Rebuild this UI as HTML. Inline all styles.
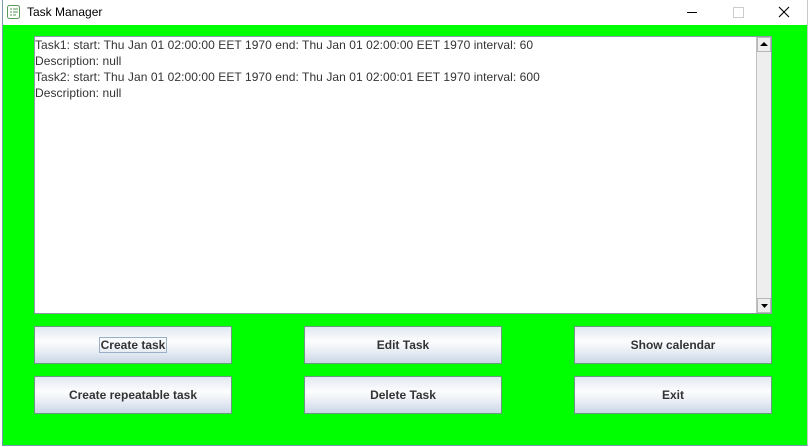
<!DOCTYPE html>
<html><head><style>
body{margin:0;width:811px;height:447px;background:#fff;position:relative;overflow:hidden;font-family:"Liberation Sans",Arial,sans-serif}
.title{position:absolute;left:0;top:0;width:811px;height:25px;background:#fff}
.title span{position:absolute;left:27px;top:5px;font-size:12px;color:#000}
.green{position:absolute;left:3px;top:25px;width:805px;height:421px;background:#00ff00}
.frame{position:absolute;left:2px;top:0;width:806px;height:446px;border-left:1px solid #7a9ab0;border-right:1px solid #c8c8c8;border-bottom:1px solid #7a9ab0;box-sizing:border-box}
.ta{position:absolute;left:34px;top:36px;width:738px;height:278px;background:#fff;border:1px solid #8a9aa8;box-sizing:border-box}
.ta pre{margin:0;position:absolute;left:0;top:0;font-family:"Liberation Sans",Arial,sans-serif;font-size:12px;letter-spacing:0.06px;line-height:16px;color:#333}
.sb{position:absolute;right:0;top:0;width:15px;height:276px;background:#eeeeee;border-left:1px solid #c0c0c0;box-sizing:border-box}
.ab{position:absolute;left:0;width:14px;height:15px;background:#eee;border:1px solid #b8b8b8;box-sizing:border-box}
.btn{position:absolute;width:198px;height:38px;border:1px solid #6a9a80;box-sizing:border-box;background:linear-gradient(#e2e8f0 0%,#fcfdfe 40%,#e6ecf4 70%,#c9d6e6 100%);font-weight:bold;font-size:12px;color:#333;text-align:center;line-height:37px}
</style></head><body>
<div class="title">
<svg style="position:absolute;left:6px;top:4px" width="16" height="16" viewBox="0 0 16 16"><rect x="1.5" y="1.5" width="12" height="13" rx="2" fill="#fff" stroke="#5a9a5a"/><path d="M4 5h2M7 5h5M4 8h2M7 8h5M4 11h2M7 11h3" stroke="#5a9a5a"/></svg>
<span>Task Manager</span>
<div style="position:absolute;left:687px;top:12px;width:10px;height:1px;background:#000"></div>
<div style="position:absolute;left:733px;top:7px;width:9px;height:9px;border:1px solid #ccc"></div>
<svg style="position:absolute;left:778px;top:6px" width="12" height="12"><path d="M1 1L11 11M11 1L1 11" stroke="#000" stroke-width="1.1"/></svg>
</div>
<div class="green"></div>
<div class="frame"></div>
<div class="ta"><pre>Task1: start: Thu Jan 01 02:00:00 EET 1970 end: Thu Jan 01 02:00:00 EET 1970 interval: 60
Description: null
Task2: start: Thu Jan 01 02:00:00 EET 1970 end: Thu Jan 01 02:00:01 EET 1970 interval: 600
Description: null</pre>
<div class="sb"><div class="ab" style="top:0"><svg width="12" height="13"><path d="M2 8h8L6 4z" fill="#000"/></svg></div>
<div class="ab" style="bottom:0"><svg width="12" height="13"><path d="M3 5h7L6.5 9z" fill="#000"/></svg></div></div></div>
<div class="btn" style="left:34px;top:326px"><span style="border:1px solid #9ab0c8;padding:0 1px">Create task</span></div>
<div class="btn" style="left:304px;top:326px">Edit Task</div>
<div class="btn" style="left:574px;top:326px">Show calendar</div>
<div class="btn" style="left:34px;top:376px">Create repeatable task</div>
<div class="btn" style="left:304px;top:376px">Delete Task</div>
<div class="btn" style="left:574px;top:376px">Exit</div>
</body></html>
